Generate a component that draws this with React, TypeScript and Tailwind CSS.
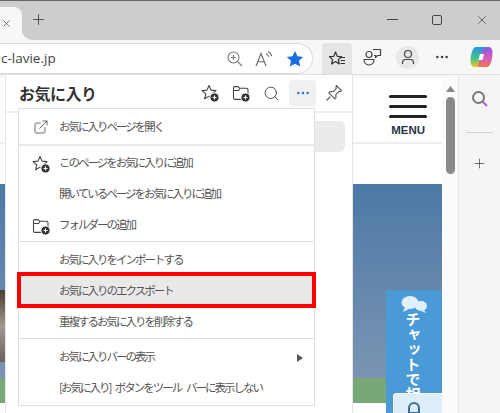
import { ExternalLink, MoreHorizontal, Plus, Search, X } from "lucide-react";

const jp = "font-['Noto_Sans_CJK_JP','Noto_Sans',sans-serif]";

function AddBadge() {
  return (
    <g>
      <circle cx="14.5" cy="14.5" r="4.6" fill="#333" stroke="#fff" strokeWidth="1" />
      <path d="M14.5 12.5v4M12.5 14.5h4" stroke="#fff" strokeWidth="1.1" />
    </g>
  );
}

function StarAdd() {
  return (
    <svg width="20" height="20" viewBox="0 0 20 20" fill="none">
      <path
        d="M9 2.5l2 4.6 5 .5-3.8 3.300 1.200 4.900L9 13.100l-4.400 2.700 1.200-4.900L2 7.600l5-.5z"
        stroke="#444"
        strokeWidth="1.1"
        strokeLinejoin="round"
      />
      <AddBadge />
    </svg>
  );
}

function FolderAdd() {
  return (
    <svg width="20" height="20" viewBox="0 0 20 20" fill="none">
      <path
        d="M2.5 15V5c0-.8.6-1.400 1.400-1.400h3.200l1.700 1.700h6.800c.8 0 1.400.6 1.400 1.400V13M2.500 15c0 .8.6 1.400 1.400 1.400H11M2.500 7.500h5l1.400-2"
        stroke="#444"
        strokeWidth="1.1"
        strokeLinejoin="round"
      />
      <AddBadge />
    </svg>
  );
}

function Pin() {
  return (
    <svg width="20" height="20" viewBox="0 0 20 20" fill="none" stroke="#555" strokeWidth="1.1" strokeLinejoin="round">
      <path d="M12.300 2.500l5.200 5.200-1.300.9-1.200-.3-3.200 3.300.2 3-1.200 1.200-6-6 1.200-1.200 3 .2 3.300-3.200-.3-1.200z" />
      <path d="M6.300 13.700L2.500 17.500" />
    </svg>
  );
}

function FavoritesBar() {
  return (
    <svg width="20" height="20" viewBox="0 0 20 20" fill="none" stroke="#333" strokeWidth="1.2" strokeLinejoin="round">
      <path d="M8.500 3l1.800 4.300 4.200.4-3.200 2.900 1 4.400-3.800-2.400-3.900 2.400 1-4.400L2.500 7.700l4.300-.4z" />
      <path d="M13 8.500h5M13.500 11.500h4.500M13.500 14.500h4.500" />
    </svg>
  );
}

function Collections() {
  return (
    <svg width="22" height="22" viewBox="0 0 22 22" fill="none" stroke="#444" strokeWidth="1.2" strokeLinejoin="round">
      <circle cx="8" cy="8.500" r="3" />
      <path d="M3 13.500h10c0 3-2 5.500-5 5.500s-5-2.500-5-5.500z" />
      <path d="M12 3.500h7.500v6h-3l-2 2v-2H13" />
    </svg>
  );
}

function ReadAloud() {
  return (
    <svg width="20" height="20" viewBox="0 0 20 20" fill="none" stroke="#666" strokeWidth="1.1">
      <path d="M2 17L7 4.500 12 17M3.800 12.800h6.400" />
      <path d="M12 4.500c1.500.7 2.300 1.800 2.700 3.200M14 2.500c2 .9 3.200 2.500 3.700 4.500" />
    </svg>
  );
}

function ZoomIn() {
  return (
    <svg width="18" height="18" viewBox="0 0 18 18" fill="none" stroke="#777" strokeWidth="1.1">
      <circle cx="7.500" cy="7.500" r="5.500" />
      <path d="M11.500 11.500L16 16M7.500 5v5M5 7.500h5" />
    </svg>
  );
}

function Profile() {
  return (
    <svg width="14" height="16" viewBox="0 0 14 16" fill="none" stroke="#444" strokeWidth="1.2">
      <circle cx="7" cy="5" r="3.500" />
      <path d="M1.500 15v-1.500c0-2 1.500-3 3-3h5c1.500 0 3 1 3 3V15" />
    </svg>
  );
}

function Copilot() {
  return (
    <svg width="23" height="22" viewBox="0 0 23 22">
      <defs>
        <linearGradient id="cl" x1="0" y1="0" x2="0" y2="1">
          <stop offset="0" stopColor="#2b8fe8" />
          <stop offset="0.55" stopColor="#3dc48a" />
          <stop offset="1" stopColor="#f5c52a" />
        </linearGradient>
        <linearGradient id="cr" x1="0" y1="0" x2="0" y2="1">
          <stop offset="0" stopColor="#7c5ce0" />
          <stop offset="0.55" stopColor="#d85cc0" />
          <stop offset="1" stopColor="#f2764f" />
        </linearGradient>
      </defs>
      <path d="M6 1h8c1.500 0 1 1.500.5 3L11 16c-.8 3-2 5-4.500 5H5c-3 0-4.500-2-4.500-5.500C.5 8 3 1 6 1z" fill="url(#cl)" />
      <path d="M17 21H9c-1.500 0-1-1.500-.5-3L12 6c.8-3 2-5 4.500-5H18c3 0 4.500 2 4.500 5.500C22.500 14 20 21 17 21z" fill="url(#cr)" />
      <path d="M10 8h4l-1.500 6h-4z" fill="#fff" />
    </svg>
  );
}

function MenuRow({
  label,
  icon,
  active,
  arrow,
}: {
  label: string;
  icon?: React.ReactNode;
  active?: boolean;
  arrow?: boolean;
}) {
  return (
    <div className={`relative flex h-[31px] items-center text-[#555] ${active ? "bg-[#e9e9e9]" : ""}`}>
      <span className="flex w-[40px] shrink-0 justify-center pl-[4px]">{icon}</span>
      <span className="flex-1 whitespace-nowrap pb-[2px] text-[11.5px] tracking-[-2px] [word-spacing:4px]">{label}</span>
      {arrow && (
        <svg width="6" height="8" viewBox="0 0 6 8" className="mr-[11px]">
          <path d="M0 0l6 4-6 4z" fill="#555" />
        </svg>
      )}
      {active && <span className="absolute -bottom-px -left-[2px] -right-[2px] -top-[4px] border-4 border-[#ff0000]" />}
    </div>
  );
}

export default function App() {
  return (
    <div className={`relative flex h-[413px] w-[500px] flex-col overflow-hidden bg-[#f7f7f7] ${jp}`}>
      {/* tab strip */}
      <div className="flex h-10 shrink-0 border-t border-[#666] bg-[#f7f7f7]">
        <div className="w-[22px] bg-[#cdcdcd] pt-[6px]">
          <div className="flex h-[33px] items-center justify-end rounded-tr-lg bg-[#f7f7f7] pr-[10px]">
            <X size={11} strokeWidth={1.4} color="#333" />
          </div>
        </div>
        <div className="flex flex-1 items-center rounded-bl-[10px] bg-[#cdcdcd] pb-[2px]">
          <Plus size={17} strokeWidth={1.1} color="#333" className="ml-[8px]" />
          <div className="ml-auto flex items-center pr-[2px]">
            <div className="h-[1.5px] w-[11px] bg-[#444]" />
            <div className="ml-[34px] h-[10px] w-[10px] rounded-[2px] border-[1.5px] border-[#444]" />
            <X size={14} strokeWidth={1.1} color="#333" className="ml-[33px] mr-[9px]" />
          </div>
        </div>
      </div>

      {/* toolbar */}
      <div className="flex h-[34px] shrink-0 items-center">
        <div className="flex h-[31px] w-[313px] items-center self-end rounded-r-full border border-l-0 border-[#dcdcdc] bg-white">
          <span className="ml-[1px] font-['Open_Sans',sans-serif] text-[13.5px] text-[#444]">c-lavie.jp</span>
          <span className="ml-auto"><ZoomIn /></span>
          <span className="ml-[10px]"><ReadAloud /></span>
          <svg width="18" height="18" viewBox="0 0 18 18" className="ml-[12px] mr-[8px]">
            <path d="M9 1l2.500 5.200 5.700.7-4.200 3.900 1.100 5.700L9 13.700l-5.100 2.800L5 10.800.8 6.900l5.700-.7z" fill="#1a6ce0" />
          </svg>
        </div>
        <div className="ml-[9px] flex h-[31px] w-[30px] items-center justify-center self-end rounded-t-[4px] bg-[#e5e5e5]">
          <FavoritesBar />
        </div>
        <span className="ml-[9px]"><Collections /></span>
        <div className="ml-[13px] flex h-[23px] w-[23px] items-center justify-center rounded-full bg-[#e8e8e8]">
          <Profile />
        </div>
        <MoreHorizontal size={16} strokeWidth={1.6} color="#333" className="ml-[15px]" />
        <span className="ml-[20px]"><Copilot /></span>
      </div>

      {/* content */}
      <div className="relative flex min-h-0 flex-1 border-t border-[#dedede]">
        <div className="mt-[3px] flex w-[458px] rounded-tr-lg bg-white">
          <div className="relative w-[442px]">
            <div className="flex h-[66px] flex-col items-end border-b-2 border-[#eee] pr-[15px] pt-[17px]">
              <div className="flex w-[38px] flex-col gap-[7px]">
                <div className="h-[3px] rounded bg-[#222]" />
                <div className="h-[3px] rounded bg-[#222]" />
                <div className="h-[3px] rounded bg-[#222]" />
              </div>
              <span className="mr-[2px] mt-[5px] font-['Liberation_Sans',sans-serif] text-[11.5px] font-bold leading-[14px] text-[#2a3548]">MENU</span>
            </div>
            <div className="relative mt-[40px] flex h-[219px] flex-col bg-gradient-to-b from-[#4c79a6] to-[#8098b4]">
              <div className="absolute left-0 top-[106px] h-[72px] w-[5px] bg-gradient-to-b from-[#4a4038] via-[#a09890] to-[#6a645e]" />
              <div className="flex-1" />
              <div className="h-[25px] bg-[#78a878]" />
            </div>
            <div className="absolute right-0 top-[212px] flex h-[131px] w-[56px] flex-col items-center overflow-hidden rounded-tl-[4px] bg-[#4a9ad8] pt-[5px]">
              <svg width="28" height="18" viewBox="0 0 28 18" fill="#dff0fb">
                <ellipse cx="10" cy="7.500" rx="8.500" ry="6.500" />
                <path d="M5 12l-2 5 6-3z" />
                <ellipse cx="21" cy="11" rx="6" ry="5" />
                <path d="M24 15l2 3-5-2z" />
              </svg>
              <div className="-ml-[2px] -mt-[1px] text-[15px] font-bold leading-[17px] text-white [writing-mode:vertical-rl]">チャットで相談</div>
            </div>
            <div className="absolute bottom-0 right-0 flex h-[20px] w-[49px] justify-center rounded-tl-[4px] border-l border-t border-white bg-[#dceef8] pt-[8px]">
              <div className="mr-[8px] h-3 w-3 rounded-t-full border-2 border-[#3a6f9a]" />
            </div>
          </div>
          <div className="flex w-4 flex-col items-center bg-[#fbfbfb] pt-[8px]">
            <svg width="9" height="6" viewBox="0 0 9 6">
              <path d="M4.500 0L9 6H0z" fill="#888" />
            </svg>
            <div className="mt-[5px] h-[77px] w-[9px] rounded-full bg-[#8a8a8a]" />
          </div>
        </div>
        <div className="flex w-[42px] flex-col items-center border-l border-[#e5e5e5] bg-[#f5f5f5] pt-[15px]">
          <svg width="18" height="18" viewBox="0 0 18 18" fill="none" strokeWidth="2">
            <circle cx="7.500" cy="7.500" r="5.500" stroke="#777" />
            <path d="M11.500 11.500L16 16" stroke="#9b6bd6" />
          </svg>
          <div className="mt-[24px] h-px w-[27px] bg-[#d0d0d0]" />
          <Plus size={15} strokeWidth={1.1} color="#333" className="mt-[23px]" />
        </div>

        {/* favorites flyout */}
        <div className="absolute bottom-0 left-[5px] top-0 flex w-[348px] flex-col border-x border-[#e5e5e5] bg-white">
          <div className="flex h-[38px] shrink-0 items-center border-b-2 border-[#eee]">
            <span className="ml-[13px] text-[16px] font-bold tracking-[-0.5px] text-[#333]">お気に入り</span>
            <div className="ml-auto flex items-center">
              <StarAdd />
              <span className="ml-[11px]"><FolderAdd /></span>
              <Search size={17} strokeWidth={1.3} color="#444" className="ml-[12px]" />
              <div className="ml-[9px] flex h-[26px] w-[27px] items-center justify-center rounded-[4px] bg-[#f0f0f0]">
                <MoreHorizontal size={16} strokeWidth={1.6} color="#1a6ce0" />
              </div>
              <span className="ml-[8px] mr-[8px]"><Pin /></span>
            </div>
          </div>
          <div className="ml-[14px] mr-[7px] mt-[8px] h-[31px] rounded-md bg-[#ebebeb]" />
        </div>

        {/* more menu */}
        <div className="absolute left-[18px] top-[33px] w-[297px] border border-[#e0e0e0] bg-white pb-px">
          <div className="flex h-[35px] items-center text-[#555]">
            <span className="flex w-[40px] shrink-0 justify-center pl-[4px]"><ExternalLink size={16} strokeWidth={1.2} color="#444" /></span>
            <span className="text-[11.5px] tracking-[-2px]">お気に入りページを開く</span>
          </div>
          <div className="h-[2px] bg-[#eaeaea]" />
          <div className="pt-[2px]">
            <MenuRow label="このページをお気に入りに追加" icon={<StarAdd />} />
            <MenuRow label="開いているページをお気に入りに追加" />
            <MenuRow label="フォルダーの追加" icon={<FolderAdd />} />
          </div>
          <div className="h-px bg-[#dcdcdc]" />
          <div className="pt-[3px]">
            <MenuRow label="お気に入りをインポートする" />
            <MenuRow label="お気に入りのエクスポート" active />
            <MenuRow label="重複するお気に入りを削除する" />
          </div>
          <div className="h-px bg-[#dcdcdc]" />
          <div className="pt-[3px]">
            <MenuRow label="お気に入りバーの表示" arrow />
            <MenuRow label="[お気に入り] ボタンをツール バーに表示しない" />
          </div>
        </div>
      </div>
    </div>
  );
}
